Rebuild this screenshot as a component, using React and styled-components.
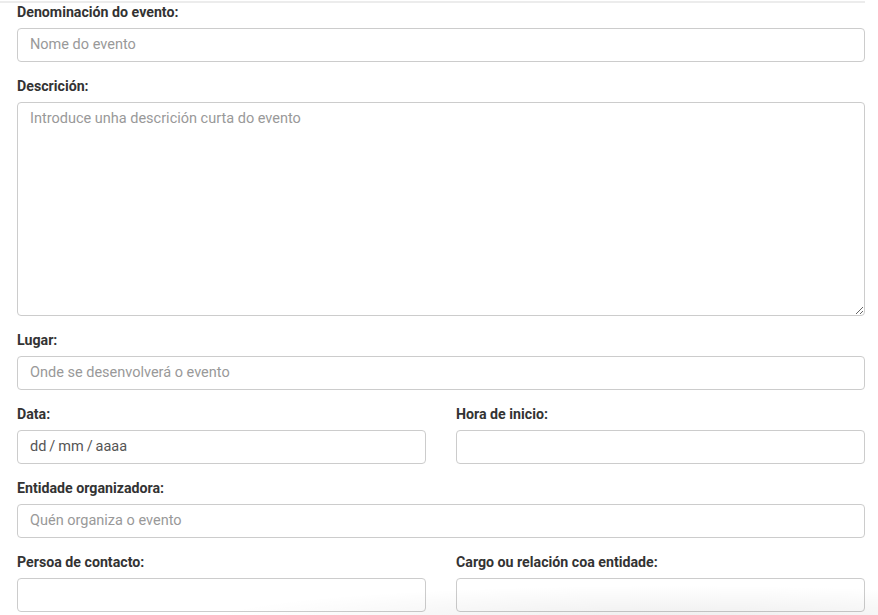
import React from 'react';
import styled, { createGlobalStyle } from 'styled-components';

const GlobalStyle = createGlobalStyle`
  html, body {
    margin: 0;
    padding: 0;
    background: #fff;
  }
  body {
    font-family: Roboto, "Noto Sans", "Liberation Sans", sans-serif;
    color: #333;
    overflow: hidden;
  }
`;

const fields = [
  { id: 'nome', label: 'Denominación do evento:', placeholder: 'Nome do evento' },
  { id: 'desc', label: 'Descrición:', placeholder: 'Introduce unha descrición curta do evento', multiline: true },
  { id: 'lugar', label: 'Lugar:', placeholder: 'Onde se desenvolverá o evento' },
  [
    { id: 'data', label: 'Data:', value: 'dd\u2009/\u2009mm\u2009/\u2009aaaa' },
    { id: 'hora', label: 'Hora de inicio:' },
  ],
  { id: 'entidade', label: 'Entidade organizadora:', placeholder: 'Quén organiza o evento' },
  [
    { id: 'persoa', label: 'Persoa de contacto:' },
    { id: 'cargo', label: 'Cargo ou relación coa entidade:' },
  ],
];

const Field = ({ field }) => (
  <Group>
    <Label htmlFor={field.id}>{field.label}</Label>
    {field.multiline ? (
      <TextArea id={field.id} placeholder={field.placeholder} />
    ) : (
      <Input
        id={field.id}
        type="text"
        placeholder={field.placeholder}
        defaultValue={field.value}
        readOnly={!!field.value}
      />
    )}
  </Group>
);

const App = () => (
  <>
    <GlobalStyle />
    <Page>
      <Rule />
      <Form onSubmit={(e) => e.preventDefault()}>
        {fields.map((f) =>
          Array.isArray(f) ? (
            <Row key={f[0].id}>
              {f.map((sub) => (
                <Field key={sub.id} field={sub} />
              ))}
            </Row>
          ) : (
            <Field key={f.id} field={f} />
          )
        )}
      </Form>
      <BottomShade />
    </Page>
  </>
);

// --- STYLED-COMPONENTS ---

const Page = styled.div`
  position: relative;
  width: 878px;
  height: 615px;
  overflow: hidden;
`;

const Rule = styled.div`
  width: 865px;
  height: 2px;
  margin-top: 1px;
  background: #ececec;
`;

const Form = styled.form`
  width: 848px;
  padding-left: 17px;
`;

const Row = styled.div`
  display: grid;
  grid-template-columns: 1fr 1fr;
  column-gap: 30px;
`;

const Group = styled.div`
  margin-bottom: 15px;
`;

const Label = styled.label`
  display: block;
  font-size: 14.2px;
  font-weight: 700;
  line-height: 18px;
  color: #333;
  margin-bottom: 7px;
`;

const baseField = `
  display: block;
  width: 100%;
  box-sizing: border-box;
  border: 1px solid #cccccc;
  border-radius: 4px;
  background: #fff;
  font-family: Roboto, "Noto Sans", "Liberation Sans", sans-serif;
  font-size: 14.5px;
  color: #555;
  outline: none;

  &::placeholder {
    color: #999;
  }
`;

const Input = styled.input`
  ${baseField}
  height: 34px;
  padding: 5px 12px 7px;
`;

const TextArea = styled.textarea`
  ${baseField}
  height: 214px;
  line-height: 20px;
  padding: 6px 12px;
  resize: vertical;
`;

const BottomShade = styled.div`
  position: absolute;
  left: 200px;
  right: 0;
  bottom: 0;
  height: 30px;
  pointer-events: none;
  background: radial-gradient(ellipse at 70% 120%, rgba(0, 0, 0, 0.07), rgba(0, 0, 0, 0) 70%);
`;

export default App;
